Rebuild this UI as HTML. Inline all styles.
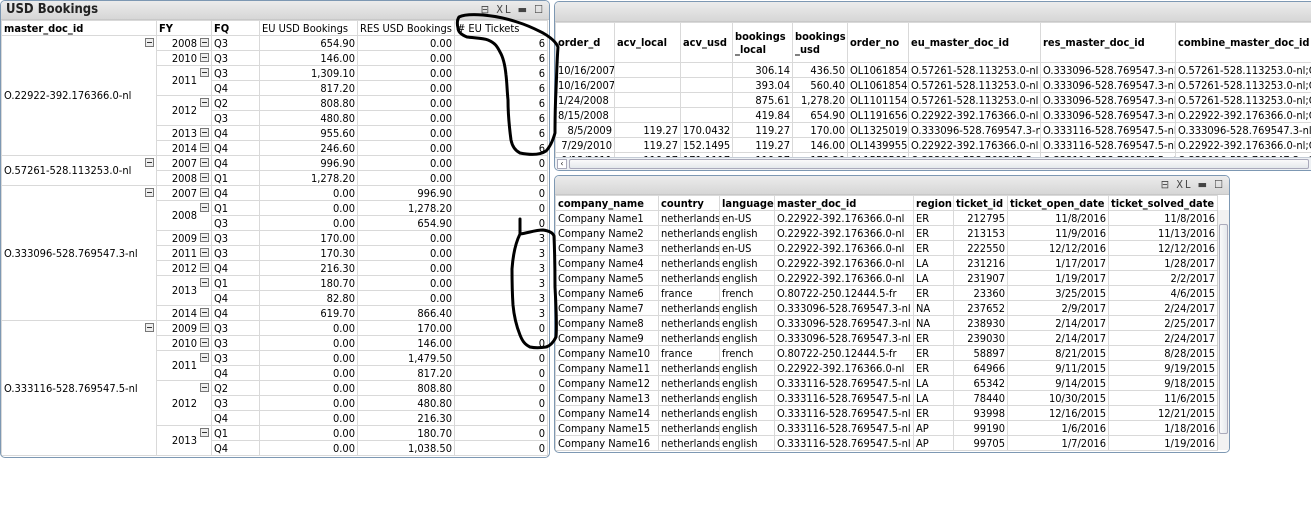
<!DOCTYPE html>
<html><head><meta charset="utf-8">
<style>
*{box-sizing:border-box;margin:0;padding:0}
body{width:1311px;height:526px;background:#fff;font-family:"DejaVu Sans Condensed","Liberation Sans",sans-serif;font-size:11px;color:#000;position:relative;overflow:hidden}
.panel{position:absolute;border:1px solid #7d98b3;border-radius:5px;background:#fff;overflow:hidden}
.title{position:absolute;left:0;right:0;top:0;background:linear-gradient(#ececec,#d6d6d6);border-bottom:1px solid #c8c8c8}
.ttl{font-size:13px;font-weight:bold;padding-left:5px;line-height:18px;color:#222}
.ic{position:absolute;top:2px;right:4px;font-size:11px;color:#444;letter-spacing:2px}
table{border-collapse:collapse;table-layout:fixed;position:absolute;left:0}
td,th{border:1px solid #d9d9d9;height:15px;line-height:13px;padding:0 2px;white-space:nowrap;overflow:hidden;font-weight:normal}
th{text-align:left;background:#fff;font-weight:bold}
.r{text-align:right}
.mb{display:inline-block;width:9px;height:9px;border:1px solid #777;background:#eee;position:relative;vertical-align:middle}
.mb:after{content:"";position:absolute;left:1px;right:1px;top:3px;height:1px;background:#333}
.yr{text-align:right;position:relative;padding-right:14px}
.yr .mb{position:absolute;right:2px;top:2px}
.doc{vertical-align:middle;position:relative}
.doc .mb{position:absolute;right:2px;top:2px}
</style></head><body>

<div class="panel" style="left:0;top:0;width:550px;height:458px">
<div class="title" style="height:19px"><div class="ttl">USD Bookings</div><div class="ic">⊟ XL ▬ ☐</div></div>
<table style="top:19px;width:546px">
<colgroup><col style="width:155px"><col style="width:55px"><col style="width:48px"><col style="width:98px"><col style="width:97px"><col style="width:93px"></colgroup>
<tr><th>master_doc_id</th><th>FY</th><th>FQ</th><th style="font-weight:normal">EU USD Bookings</th><th style="font-weight:normal">RES USD Bookings</th><th style="font-weight:normal"># EU Tickets</th></tr>
<tr><td class="doc" rowspan="8">O.22922-392.176366.0-nl<span class="mb"></span></td><td class="yr">2008<span class="mb"></span></td><td>Q3</td><td class="r">654.90</td><td class="r">0.00</td><td class="r">6</td></tr>
<tr><td class="yr">2010<span class="mb"></span></td><td>Q3</td><td class="r">146.00</td><td class="r">0.00</td><td class="r">6</td></tr>
<tr><td class="yr" rowspan="2">2011<span class="mb"></span></td><td>Q3</td><td class="r">1,309.10</td><td class="r">0.00</td><td class="r">6</td></tr>
<tr><td>Q4</td><td class="r">817.20</td><td class="r">0.00</td><td class="r">6</td></tr>
<tr><td class="yr" rowspan="2">2012<span class="mb"></span></td><td>Q2</td><td class="r">808.80</td><td class="r">0.00</td><td class="r">6</td></tr>
<tr><td>Q3</td><td class="r">480.80</td><td class="r">0.00</td><td class="r">6</td></tr>
<tr><td class="yr">2013<span class="mb"></span></td><td>Q4</td><td class="r">955.60</td><td class="r">0.00</td><td class="r">6</td></tr>
<tr><td class="yr">2014<span class="mb"></span></td><td>Q4</td><td class="r">246.60</td><td class="r">0.00</td><td class="r">6</td></tr>
<tr><td class="doc" rowspan="2">O.57261-528.113253.0-nl<span class="mb"></span></td><td class="yr">2007<span class="mb"></span></td><td>Q4</td><td class="r">996.90</td><td class="r">0.00</td><td class="r">0</td></tr>
<tr><td class="yr">2008<span class="mb"></span></td><td>Q1</td><td class="r">1,278.20</td><td class="r">0.00</td><td class="r">0</td></tr>
<tr><td class="doc" rowspan="9">O.333096-528.769547.3-nl<span class="mb"></span></td><td class="yr">2007<span class="mb"></span></td><td>Q4</td><td class="r">0.00</td><td class="r">996.90</td><td class="r">0</td></tr>
<tr><td class="yr" rowspan="2">2008<span class="mb"></span></td><td>Q1</td><td class="r">0.00</td><td class="r">1,278.20</td><td class="r">0</td></tr>
<tr><td>Q3</td><td class="r">0.00</td><td class="r">654.90</td><td class="r">0</td></tr>
<tr><td class="yr">2009<span class="mb"></span></td><td>Q3</td><td class="r">170.00</td><td class="r">0.00</td><td class="r">3</td></tr>
<tr><td class="yr">2011<span class="mb"></span></td><td>Q3</td><td class="r">170.30</td><td class="r">0.00</td><td class="r">3</td></tr>
<tr><td class="yr">2012<span class="mb"></span></td><td>Q4</td><td class="r">216.30</td><td class="r">0.00</td><td class="r">3</td></tr>
<tr><td class="yr" rowspan="2">2013<span class="mb"></span></td><td>Q1</td><td class="r">180.70</td><td class="r">0.00</td><td class="r">3</td></tr>
<tr><td>Q4</td><td class="r">82.80</td><td class="r">0.00</td><td class="r">3</td></tr>
<tr><td class="yr">2014<span class="mb"></span></td><td>Q4</td><td class="r">619.70</td><td class="r">866.40</td><td class="r">3</td></tr>
<tr><td class="doc" rowspan="9">O.333116-528.769547.5-nl<span class="mb"></span></td><td class="yr">2009<span class="mb"></span></td><td>Q3</td><td class="r">0.00</td><td class="r">170.00</td><td class="r">0</td></tr>
<tr><td class="yr">2010<span class="mb"></span></td><td>Q3</td><td class="r">0.00</td><td class="r">146.00</td><td class="r">0</td></tr>
<tr><td class="yr" rowspan="2">2011<span class="mb"></span></td><td>Q3</td><td class="r">0.00</td><td class="r">1,479.50</td><td class="r">0</td></tr>
<tr><td>Q4</td><td class="r">0.00</td><td class="r">817.20</td><td class="r">0</td></tr>
<tr><td class="yr" rowspan="3">2012<span class="mb"></span></td><td>Q2</td><td class="r">0.00</td><td class="r">808.80</td><td class="r">0</td></tr>
<tr><td>Q3</td><td class="r">0.00</td><td class="r">480.80</td><td class="r">0</td></tr>
<tr><td>Q4</td><td class="r">0.00</td><td class="r">216.30</td><td class="r">0</td></tr>
<tr><td class="yr" rowspan="2">2013<span class="mb"></span></td><td>Q1</td><td class="r">0.00</td><td class="r">180.70</td><td class="r">0</td></tr>
<tr><td>Q4</td><td class="r">0.00</td><td class="r">1,038.50</td><td class="r">0</td></tr>
</table>
</div>

<div class="panel" style="left:554px;top:1px;width:770px;height:170px">
<div class="title" style="height:20px"></div>
<table style="top:20px;width:780px">
<colgroup><col style="width:59px"><col style="width:66px"><col style="width:52px"><col style="width:60px"><col style="width:55px"><col style="width:61px"><col style="width:132px"><col style="width:135px"><col style="width:160px"></colgroup>
<tr style="height:40px"><th style="height:40px">order_d</th><th>acv_local</th><th>acv_usd</th><th style="line-height:13px">bookings<br>_local</th><th style="line-height:13px">bookings<br>_usd</th><th>order_no</th><th>eu_master_doc_id</th><th>res_master_doc_id</th><th>combine_master_doc_id</th></tr>
<tr><td>10/16/2007</td><td></td><td></td><td class="r">306.14</td><td class="r">436.50</td><td>OL1061854</td><td>O.57261-528.113253.0-nl</td><td>O.333096-528.769547.3-nl</td><td>O.57261-528.113253.0-nl;O</td></tr>
<tr><td>10/16/2007</td><td></td><td></td><td class="r">393.04</td><td class="r">560.40</td><td>OL1061854</td><td>O.57261-528.113253.0-nl</td><td>O.333096-528.769547.3-nl</td><td>O.57261-528.113253.0-nl;O</td></tr>
<tr><td>1/24/2008</td><td></td><td></td><td class="r">875.61</td><td class="r">1,278.20</td><td>OL1101154</td><td>O.57261-528.113253.0-nl</td><td>O.333096-528.769547.3-nl</td><td>O.57261-528.113253.0-nl;O</td></tr>
<tr><td>8/15/2008</td><td></td><td></td><td class="r">419.84</td><td class="r">654.90</td><td>OL1191656</td><td>O.22922-392.176366.0-nl</td><td>O.333096-528.769547.3-nl</td><td>O.22922-392.176366.0-nl;O</td></tr>
<tr><td class="r">8/5/2009</td><td class="r">119.27</td><td>170.0432</td><td class="r">119.27</td><td class="r">170.00</td><td>OL1325019</td><td>O.333096-528.769547.3-nl</td><td>O.333116-528.769547.5-nl</td><td>O.333096-528.769547.3-nl;</td></tr>
<tr><td class="r">7/29/2010</td><td class="r">119.27</td><td>152.1495</td><td class="r">119.27</td><td class="r">146.00</td><td>OL1439955</td><td>O.22922-392.176366.0-nl</td><td>O.333116-528.769547.5-nl</td><td>O.22922-392.176366.0-nl;O</td></tr>
<tr><td class="r">9/13/2011</td><td class="r">119.27</td><td>171.1117</td><td class="r">119.27</td><td class="r">170.30</td><td>OL1558569</td><td>O.333096-528.769547.3-nl</td><td>O.333116-528.769547.5-nl</td><td>O.333096-528.769547.3-nl;</td></tr>
</table>
<div style="position:absolute;left:0;top:155px;width:760px;height:13px;background:#eef1f4;border-top:1px solid #c4ccd6">
<div style="position:absolute;left:2px;top:1px;width:10px;height:10px;border:1px solid #aab;background:#fff;font-size:8px;line-height:8px;text-align:center">‹</div>
<div style="position:absolute;left:14px;top:1px;width:740px;height:10px;border:1px solid #aab;border-radius:2px;background:linear-gradient(#fafafa,#e4e8ec)"></div></div>
</div>

<div class="panel" style="left:554px;top:175px;width:676px;height:278px">
<div class="title" style="height:19px"><div class="ic">⊟ XL ▬ ☐</div></div>
<table style="top:19px;width:662px">
<colgroup><col style="width:103px"><col style="width:61px"><col style="width:55px"><col style="width:139px"><col style="width:40px"><col style="width:54px"><col style="width:101px"><col style="width:109px"></colgroup>
<tr><th>company_name</th><th>country</th><th>language</th><th>master_doc_id</th><th>region</th><th>ticket_id</th><th>ticket_open_date</th><th>ticket_solved_date</th></tr>
<tr><td>Company Name1</td><td>netherlands</td><td>en-US</td><td>O.22922-392.176366.0-nl</td><td>ER</td><td class="r">212795</td><td class="r">11/8/2016</td><td class="r">11/8/2016</td></tr>
<tr><td>Company Name2</td><td>netherlands</td><td>english</td><td>O.22922-392.176366.0-nl</td><td>ER</td><td class="r">213153</td><td class="r">11/9/2016</td><td class="r">11/13/2016</td></tr>
<tr><td>Company Name3</td><td>netherlands</td><td>en-US</td><td>O.22922-392.176366.0-nl</td><td>ER</td><td class="r">222550</td><td class="r">12/12/2016</td><td class="r">12/12/2016</td></tr>
<tr><td>Company Name4</td><td>netherlands</td><td>english</td><td>O.22922-392.176366.0-nl</td><td>LA</td><td class="r">231216</td><td class="r">1/17/2017</td><td class="r">1/28/2017</td></tr>
<tr><td>Company Name5</td><td>netherlands</td><td>english</td><td>O.22922-392.176366.0-nl</td><td>LA</td><td class="r">231907</td><td class="r">1/19/2017</td><td class="r">2/2/2017</td></tr>
<tr><td>Company Name6</td><td>france</td><td>french</td><td>O.80722-250.12444.5-fr</td><td>ER</td><td class="r">23360</td><td class="r">3/25/2015</td><td class="r">4/6/2015</td></tr>
<tr><td>Company Name7</td><td>netherlands</td><td>english</td><td>O.333096-528.769547.3-nl</td><td>NA</td><td class="r">237652</td><td class="r">2/9/2017</td><td class="r">2/24/2017</td></tr>
<tr><td>Company Name8</td><td>netherlands</td><td>english</td><td>O.333096-528.769547.3-nl</td><td>NA</td><td class="r">238930</td><td class="r">2/14/2017</td><td class="r">2/25/2017</td></tr>
<tr><td>Company Name9</td><td>netherlands</td><td>english</td><td>O.333096-528.769547.3-nl</td><td>ER</td><td class="r">239030</td><td class="r">2/14/2017</td><td class="r">2/24/2017</td></tr>
<tr><td>Company Name10</td><td>france</td><td>french</td><td>O.80722-250.12444.5-fr</td><td>ER</td><td class="r">58897</td><td class="r">8/21/2015</td><td class="r">8/28/2015</td></tr>
<tr><td>Company Name11</td><td>netherlands</td><td>english</td><td>O.22922-392.176366.0-nl</td><td>ER</td><td class="r">64966</td><td class="r">9/11/2015</td><td class="r">9/19/2015</td></tr>
<tr><td>Company Name12</td><td>netherlands</td><td>english</td><td>O.333116-528.769547.5-nl</td><td>LA</td><td class="r">65342</td><td class="r">9/14/2015</td><td class="r">9/18/2015</td></tr>
<tr><td>Company Name13</td><td>netherlands</td><td>english</td><td>O.333116-528.769547.5-nl</td><td>LA</td><td class="r">78440</td><td class="r">10/30/2015</td><td class="r">11/6/2015</td></tr>
<tr><td>Company Name14</td><td>netherlands</td><td>english</td><td>O.333116-528.769547.5-nl</td><td>ER</td><td class="r">93998</td><td class="r">12/16/2015</td><td class="r">12/21/2015</td></tr>
<tr><td>Company Name15</td><td>netherlands</td><td>english</td><td>O.333116-528.769547.5-nl</td><td>AP</td><td class="r">99190</td><td class="r">1/6/2016</td><td class="r">1/18/2016</td></tr>
<tr><td>Company Name16</td><td>netherlands</td><td>english</td><td>O.333116-528.769547.5-nl</td><td>AP</td><td class="r">99705</td><td class="r">1/7/2016</td><td class="r">1/19/2016</td></tr>
</table>
<div style="position:absolute;left:662px;top:34px;width:12px;height:240px;background:#f2f2f2;border-left:1px solid #ccc">
<div style="position:absolute;left:1px;top:14px;width:9px;height:210px;border:1px solid #aab;border-radius:2px;background:linear-gradient(90deg,#fafafa,#e4e8ec)"></div></div>
</div>

<svg width="1311" height="526" style="position:absolute;left:0;top:0" fill="none" stroke="#000" stroke-width="3" stroke-linecap="round" stroke-linejoin="round">
<path d="M558,47 C557,60 557,67 556,90 C555,110 555,125 555,133 C553,140 550,147 546,151 C540,155 530,155 520,153 C514,150 512,145 511,140 C509,125 508,110 508,100 C507,90 507,83 506,75 C505,65 503,57 500,52 C497,46 495,43 488,40 C483,38 475,38 467,37 C462,35 458,32 458,28 C457,24 457,20 459,17 C463,15 470,14 483,15 C495,16 505,18 517,22 C530,26 537,30 543,33 C550,37 556,42 558,47 Z"/>
<path d="M520,219 L520,234 C528,233 535,230 543,230 C550,231 553,233 554,236 C555,260 555,275 555,287 C556,305 557,325 556,337 C553,343 550,346 546,347 C540,348 535,348 530,347 C524,344 522,340 520,335 C516,325 514,316 513,305 C512,290 512,280 512,269 C513,255 516,242 520,234"/>
</svg>
</body></html>
